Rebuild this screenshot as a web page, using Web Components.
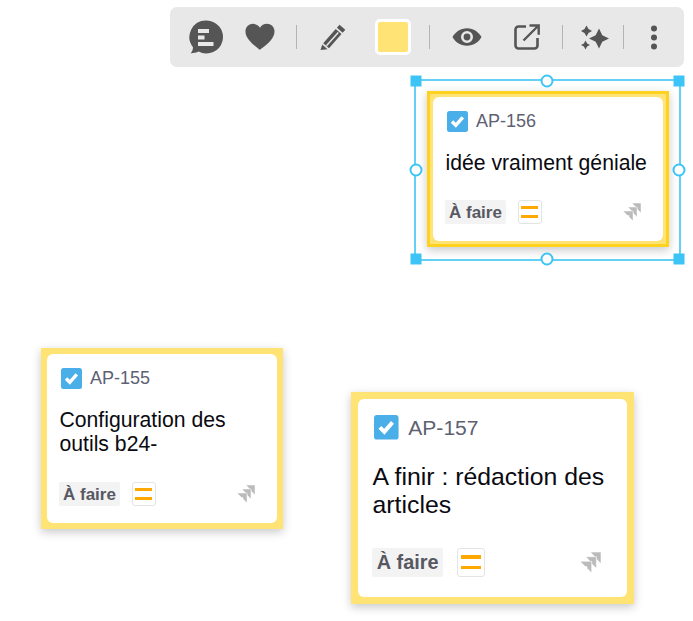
<!DOCTYPE html>
<html lang="fr"><head><meta charset="utf-8"><title>Board</title>
<style>
html,body{margin:0;padding:0;background:#fff;width:693px;height:621px;overflow:hidden;font-family:"Liberation Sans",Arial,sans-serif}
.board{position:relative;width:693px;height:621px;padding-top:7px;box-sizing:border-box;display:flex;flex-direction:column;align-items:flex-end}
</style></head><body>
<div class="board">
<board-toolbar></board-toolbar>
<task-card style="--x:427px;--y:91px;--w:242px;--h:156px;--u:1" key-id="AP-156" selected>idée vraiment géniale</task-card>
<task-card style="--x:41px;--y:348px;--w:242px;--h:181px;--u:1" key-id="AP-155">Configuration des outils b24-</task-card>
<task-card style="--x:351px;--y:392px;--w:283px;--h:212px;--u:1.17" key-id="AP-157">A finir : rédaction des articles</task-card>
<selection-box style="--x:414px;--y:79px;--w:267px;--h:182px"></selection-box>
</div>
<script>
class BoardToolbar extends HTMLElement{
constructor(){super();this.attachShadow({mode:'open'}).innerHTML=`<style>
:host{display:flex;align-items:center;width:514px;height:60px;margin-right:9px;background:#e8e8e8;border-radius:7px;box-sizing:border-box;color:#555;flex:none}
svg{display:block;flex:none;fill:#555}
.sep{width:1px;height:24px;background:#b4b4b4;flex:none}
.sw{width:30px;height:30px;box-sizing:content-box;background:#ffe475;border:3px solid #fff;border-radius:5px;flex:none}
</style>
<svg style="margin-left:19px" width="34" height="34" viewBox="0 0 34 34"><path d="M17.500 .5a16.500 16.500 0 1 1-7.800 31.050C7.500 32.600 4 33.400 1.700 33.300c1.300-1.500 2.300-3.600 2.300-6.100A16.500 16.500 0 0 1 17.500 .5z"/><g fill="#e8e8e8"><rect x="9" y="9" width="11" height="4"/><rect x="9" y="15.500" width="6.500" height="4"/><rect x="9" y="22" width="15.500" height="4"/></g></svg>
<svg style="margin-left:22px" width="30" height="28" viewBox="0 0 31 28"><path d="M15.500 27.500C11 23.500.5 16.500.5 8.500.5 3.500 4.200.4 8.400.4c3 0 5.500 1.500 7.100 4 1.600-2.500 4.100-4 7.100-4 4.200 0 7.900 3.100 7.900 8.100 0 8-10.500 15-15.500 19z"/></svg>
<div class="sep" style="margin-left:21px"></div>
<svg style="margin-left:23px" width="26" height="26" viewBox="0 0 26 26"><path d="M19.500.7l5.800 5-2.600 3-5.800-5zM15.700 5l5.800 5L9 24.300l-5.800-5z"/><path d="M2.200 20.600l5.300 4.600L.5 26z"/><path d="M17.700 7.900l1.100 1L7 22.200l-1.100-1z" fill="#e8e8e8"/></svg>
<div class="sw" style="margin-left:29px"></div>
<div class="sep" style="margin-left:18px"></div>
<svg style="margin-left:22px" width="30" height="18" viewBox="0 0 30 18"><path fill-rule="evenodd" d="M15 .2C21.600.2 26.900 4.200 29.500 9 26.900 13.800 21.600 17.800 15 17.800S3.100 13.800.5 9C3.100 4.200 8.400.2 15 .2zm0 2.800a6 6 0 1 0 0 12 6 6 0 0 0 0-12zm0 2.600a3.400 3.400 0 1 1 0 6.800 3.400 3.400 0 0 1 0-6.800z"/></svg>
<svg style="margin-left:32px" width="26" height="26" viewBox="0 0 26 26"><path fill="none" stroke="#555" stroke-width="2.600" stroke-linejoin="round" d="M12 2.500H4.500a3 3 0 0 0-3 3v16a3 3 0 0 0 3 3h16a3 3 0 0 0 3-3V14"/><path fill="none" stroke="#555" stroke-width="2.400" d="M9.500 16.500L24 2M15.500 1.500h9.200v9.200"/></svg>
<div class="sep" style="margin-left:22px"></div>
<svg style="margin-left:18px" width="29" height="27" viewBox="0 0 29 27"><path d="M18 4.500L21.300 11.200 28 14.500 21.300 17.800 18 24.500 14.700 17.800 8 14.500 14.700 11.200zM5.500 1.500L7.500 5 11 7 7.500 9 5.500 12.500 3.500 9 0 7 3.500 5zM4.500 16.500L6.100 19.400 9 21 6.100 22.600 4.500 25.500 2.900 22.600 0 21 2.900 19.400z"/></svg>
<div class="sep" style="margin-left:13px"></div>
<svg style="margin-left:26px" width="8" height="25" viewBox="0 0 8 25"><circle cx="4" cy="3.500" r="3"/><circle cx="4" cy="12.500" r="3"/><circle cx="4" cy="21.500" r="3"/></svg>`;}
}
customElements.define('board-toolbar',BoardToolbar);

class TaskCard extends HTMLElement{
constructor(){super();const id=this.getAttribute('key-id');this.attachShadow({mode:'open'}).innerHTML=`<style>
:host{position:absolute;left:var(--x);top:var(--y);width:var(--w);height:var(--h);box-sizing:border-box;background:#ffe475;box-shadow:0 3px 9px rgba(0,0,0,.22);padding:calc(6px*var(--u));display:flex}
:host([selected]){border:3px solid #ffd21f;padding:3px}
.in{flex:1;background:#fff;border-radius:6px;display:flex;flex-direction:column;padding:calc(14px*var(--u)) calc(15px*var(--u)) calc(17.500px*var(--u)) calc(12px*var(--u));box-sizing:border-box;min-width:0}
.head{display:flex;align-items:center;gap:calc(8px*var(--u));padding-left:calc(2px*var(--u));height:calc(21px*var(--u));color:#5e6172;font-size:calc(18px*var(--u))}
.head svg{width:calc(21px*var(--u));height:calc(21px*var(--u));display:block;flex:none}
.title{margin-top:calc(19.400px*var(--u));margin-left:.5px;font-size:calc(21.200px*var(--u));line-height:calc(24px*var(--u));color:#0a0a10;flex:1}
.foot{display:flex;align-items:center;height:calc(24px*var(--u))}
.st{background:#f3f3f3;border-radius:2px;padding:0 calc(4px*var(--u));height:calc(24px*var(--u));line-height:calc(25.500px*var(--u));font-weight:700;font-size:calc(17px*var(--u));color:#585862;box-sizing:border-box}
.pr{margin-left:calc(12px*var(--u));width:calc(24px*var(--u));height:calc(24px*var(--u));box-sizing:border-box;border:1px solid #e4e4e4;border-radius:3px;display:flex;flex-direction:column;justify-content:center;align-items:center;gap:calc(6px*var(--u))}
.pr i{display:block;width:calc(17px*var(--u));height:calc(3px*var(--u));background:#ffa800}
.jira{margin-left:auto;margin-right:calc(7px*var(--u));width:calc(18px*var(--u));height:calc(18px*var(--u));display:block}
</style><div class="in"><div class="head"><svg viewBox="0 0 21 21"><rect width="21" height="21" rx="2.500" fill="#4aaee8"/><path d="M5 10.500l3.800 3.800 7-8" fill="none" stroke="#fff" stroke-width="3.400"/></svg><span>${id}</span></div>
<div class="title"><slot></slot></div>
<div class="foot"><span class="st">À faire</span><span class="pr"><i></i><i></i></span><svg class="jira" viewBox="0 0 18 18"><g fill="#bbb" stroke="#fff" stroke-width=".5"><path d="M9 0H18V10L14 6V4.500H13z"/><path d="M5 4H14V14L10 10V8.500H9z"/><path d="M0 8H10V18L6 14V12.500H4.500z"/></g></svg></div></div>`;}
}
customElements.define('task-card',TaskCard);

class SelectionBox extends HTMLElement{
constructor(){super();const sq=(x,y)=>`<b style="left:${x};top:${y}"></b>`,ci=(x,y)=>`<u style="left:${x};top:${y}"></u>`;
this.attachShadow({mode:'open'}).innerHTML=`<style>
:host{position:absolute;left:var(--x);top:var(--y);width:var(--w);height:var(--h);box-sizing:border-box;border:2px solid #63d0f6;pointer-events:none}
b,u{position:absolute;display:block;box-sizing:border-box;transform:translate(-50%,-50%)}
b{width:11px;height:11px;background:#3cc4f7;margin:-.5px 0 0 -.5px}
u{width:13px;height:13px;border-radius:50%;background:#fff;border:2px solid #3cc4f7;margin:-.5px}
</style>${sq('0','0')}${sq('100%','0')}${sq('0','100%')}${sq('100%','100%')}${ci('50%','0')}${ci('50%','100%')}${ci('0','50%')}${ci('100%','50%')}`;}
}
customElements.define('selection-box',SelectionBox);
</script>
</body></html>
